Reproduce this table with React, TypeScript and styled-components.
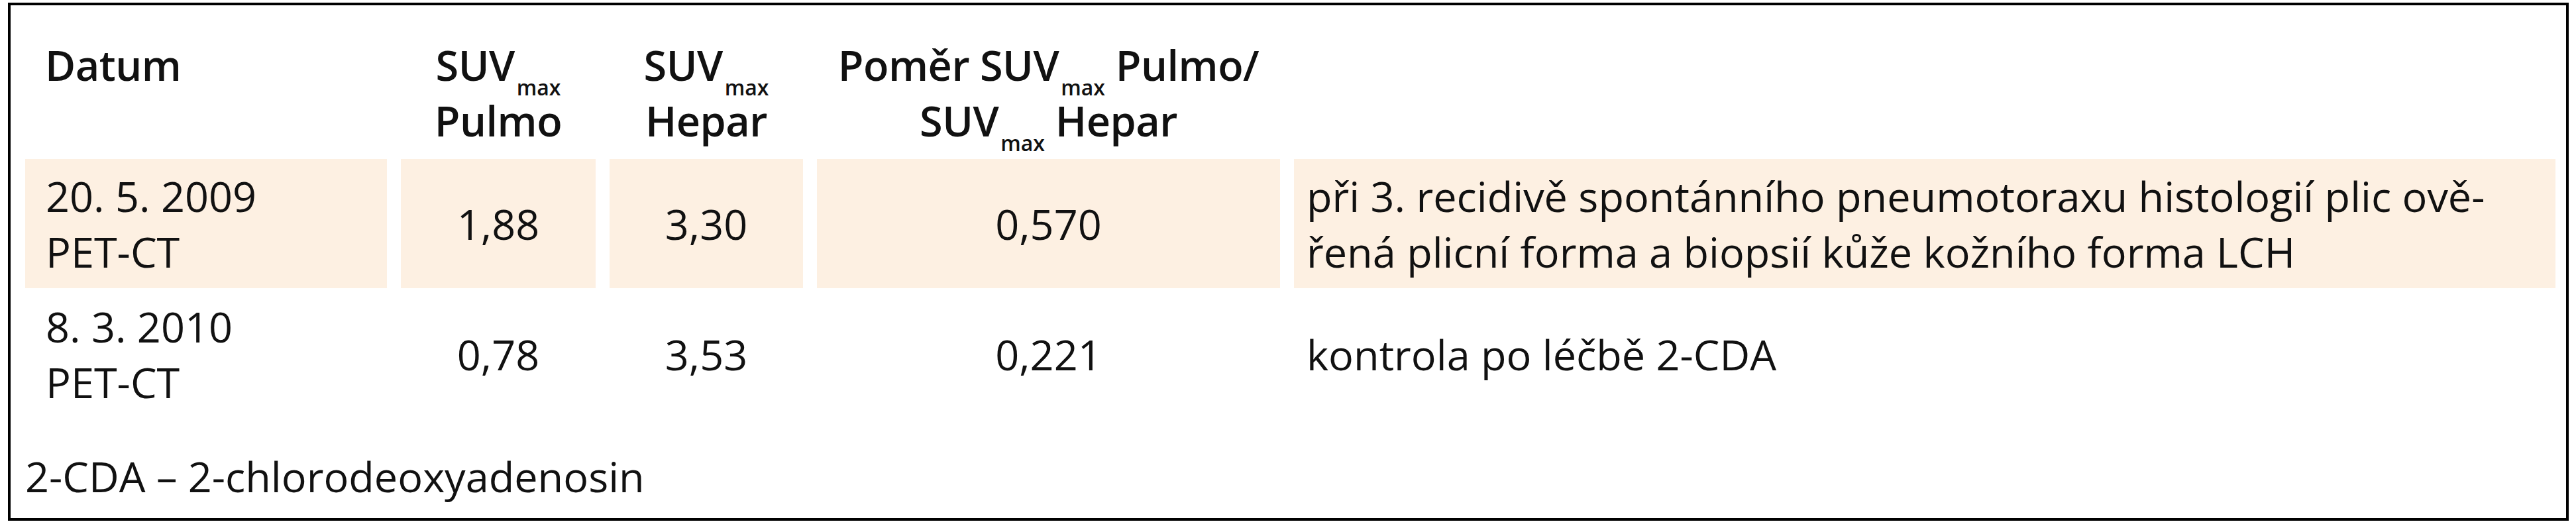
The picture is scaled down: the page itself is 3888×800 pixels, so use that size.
import React from "react";
import styled, { createGlobalStyle } from "styled-components";

const GlobalStyle = createGlobalStyle`
  html, body {
    margin: 0;
    padding: 0;
    background: #ffffff;
  }
  body {
    font-family: "Open Sans", "Noto Sans", "DejaVu Sans", sans-serif;
    color: #111111;
  }
`;

const COLS = "546px 294px 292px 699px 1904px";

const Frame = styled.div`
  box-sizing: border-box;
  margin: 4px 0 0 12px;
  width: 3865px;
  height: 782px;
  border: 4px solid #000000;
  padding: 0 0 0 22px;
  display: flex;
  flex-direction: column;
`;

const Table = styled.div`
  display: flex;
  flex-direction: column;
  gap: 2px;
`;

const Row = styled.div<{ $head?: boolean }>`
  display: grid;
  grid-template-columns: ${COLS};
  column-gap: 21px;
  height: ${(p) => (p.$head ? "230px" : "195px")};
`;

const HeadCell = styled.div<{ $align?: "left" | "center"; $pad?: number }>`
  box-sizing: border-box;
  padding-top: 48px;
  padding-left: ${(p) => p.$pad ?? 0}px;
  font-size: 63px;
  line-height: 84px;
  font-weight: 600;
  letter-spacing: -0.5px;
  text-align: ${(p) => p.$align ?? "center"};
  white-space: nowrap;
`;

const Cell = styled.div<{ $align?: "left" | "center"; $shaded?: boolean; $pad?: number }>`
  box-sizing: border-box;
  display: flex;
  flex-direction: column;
  justify-content: center;
  align-items: ${(p) => (p.$align === "left" ? "flex-start" : "center")};
  padding-left: ${(p) => p.$pad ?? 0}px;
  background: ${(p) => (p.$shaded ? "#fdf0e2" : "transparent")};
  font-size: 63px;
  line-height: 84px;
  font-weight: 400;
  white-space: nowrap;
`;

const Line = styled.span`
  display: block;
`;

const Sub = styled.span`
  position: relative;
  top: 22px;
  font-size: 32px;
  line-height: 0;
  font-weight: 600;
  letter-spacing: 0;
  margin-left: 3px;
`;

const Note = styled.div`
  margin-top: 45px;
  font-size: 63px;
  line-height: 84px;
  white-space: nowrap;
`;

type BodyRow = {
  date: string;
  pulmo: string;
  hepar: string;
  ratio: string;
  note: string[];
  shaded: boolean;
};

const rows: BodyRow[] = [
  {
    date: "20. 5. 2009",
    pulmo: "1,88",
    hepar: "3,30",
    ratio: "0,570",
    note: [
      "při 3. recidivě spontánního pneumotoraxu histologií plic ově-",
      "řená plicní forma a biopsií kůže kožního forma LCH",
    ],
    shaded: true,
  },
  {
    date: "8. 3. 2010",
    pulmo: "0,78",
    hepar: "3,53",
    ratio: "0,221",
    note: ["kontrola po léčbě 2-CDA"],
    shaded: false,
  },
];

export default function App() {
  return (
    <>
      <GlobalStyle />
      <Frame>
        <Table>
          <Row $head>
            <HeadCell $align="left" $pad={30}>
              Datum
            </HeadCell>
            <HeadCell>
              <Line>
                SUV<Sub>max</Sub>
              </Line>
              <Line>Pulmo</Line>
            </HeadCell>
            <HeadCell>
              <Line>
                SUV<Sub>max</Sub>
              </Line>
              <Line>Hepar</Line>
            </HeadCell>
            <HeadCell>
              <Line>
                Poměr SUV<Sub>max</Sub> Pulmo/
              </Line>
              <Line>
                SUV<Sub>max</Sub> Hepar
              </Line>
            </HeadCell>
            <HeadCell />
          </Row>
          {rows.map((r) => (
            <Row key={r.date}>
              <Cell $align="left" $pad={31} $shaded={r.shaded}>
                <Line>{r.date}</Line>
                <Line>PET-CT</Line>
              </Cell>
              <Cell $shaded={r.shaded}>{r.pulmo}</Cell>
              <Cell $shaded={r.shaded}>{r.hepar}</Cell>
              <Cell $shaded={r.shaded}>{r.ratio}</Cell>
              <Cell $align="left" $pad={19} $shaded={r.shaded}>
                {r.note.map((n) => (
                  <Line key={n}>{n}</Line>
                ))}
              </Cell>
            </Row>
          ))}
        </Table>
        <Note>2-CDA – 2-chlorodeoxyadenosin</Note>
      </Frame>
    </>
  );
}
